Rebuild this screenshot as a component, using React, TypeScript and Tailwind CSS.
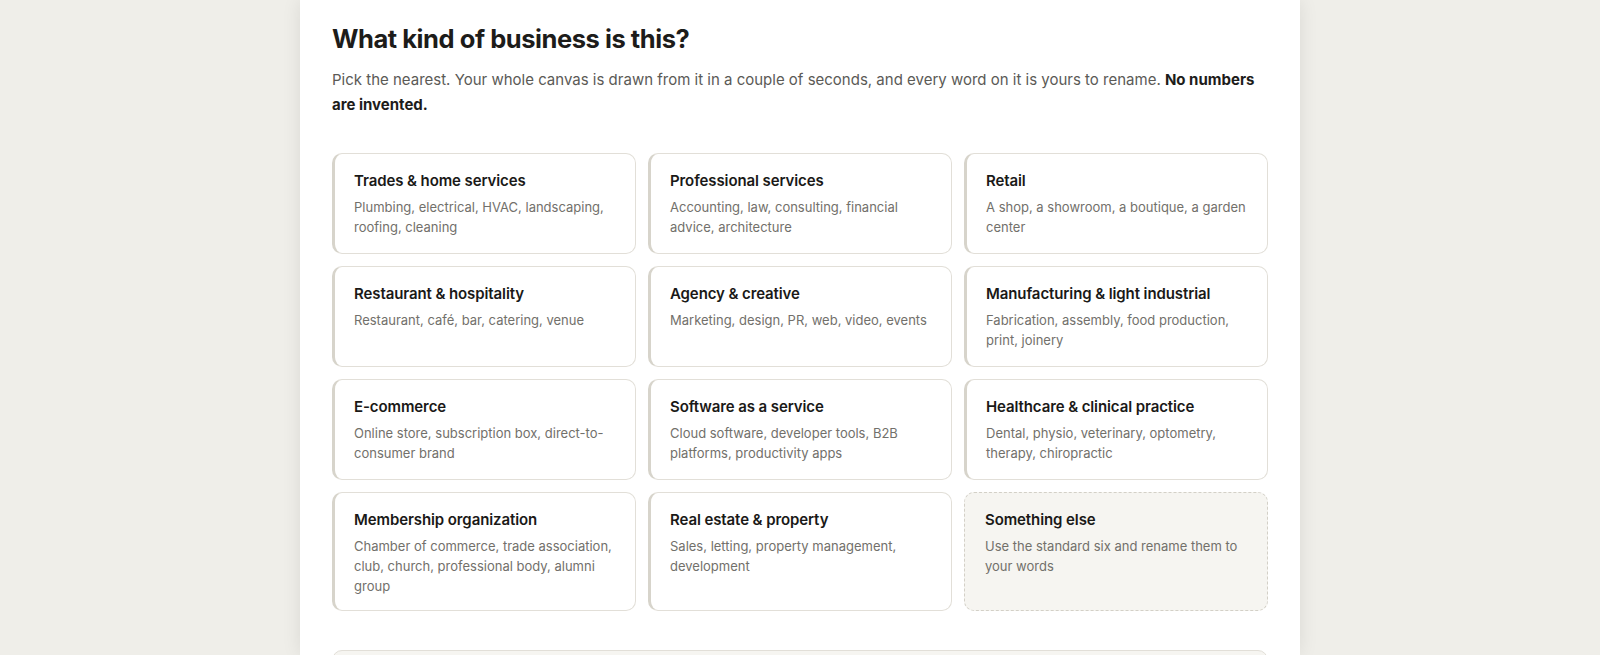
import React from "react";

const items: { title: string; desc: string; other?: boolean }[] = [
  { title: "Trades & home services", desc: "Plumbing, electrical, HVAC, landscaping, roofing, cleaning" },
  { title: "Professional services", desc: "Accounting, law, consulting, financial advice, architecture" },
  { title: "Retail", desc: "A shop, a showroom, a boutique, a garden center" },
  { title: "Restaurant & hospitality", desc: "Restaurant, café, bar, catering, venue" },
  { title: "Agency & creative", desc: "Marketing, design, PR, web, video, events" },
  { title: "Manufacturing & light industrial", desc: "Fabrication, assembly, food production, print, joinery" },
  { title: "E-commerce", desc: "Online store, subscription box, direct-to-consumer brand" },
  { title: "Software as a service", desc: "Cloud software, developer tools, B2B platforms, productivity apps" },
  { title: "Healthcare & clinical practice", desc: "Dental, physio, veterinary, optometry, therapy, chiropractic" },
  { title: "Membership organization", desc: "Chamber of commerce, trade association, club, church, professional body, alumni group" },
  { title: "Real estate & property", desc: "Sales, letting, property management, development" },
  { title: "Something else", desc: "Use the standard six and rename them to your words", other: true },
];

export default function App() {
  return (
    <div className="min-h-[655px] h-[655px] overflow-hidden bg-[#efeee9] flex justify-center" style={{ fontFamily: "Inter, 'Noto Sans', sans-serif" }}>
      <div className="w-[1000px] bg-white shadow-[0_0_18px_rgba(0,0,0,0.09)] px-8 pt-[21px]">
        <h1 className="text-[25.5px] leading-[36px] font-bold text-[#1d1c1a] tracking-[-0.45px]">What kind of business is this?</h1>
        <p className="mt-[10px] text-[15px] leading-[25px] text-[#5b5a56]">
          Pick the nearest. Your whole canvas is drawn from it in a couple of seconds, and every word on it is yours to rename.{" "}
          <strong className="font-bold text-[#1d1c1a]">No numbers are invented.</strong>
        </p>
        <div className="mt-[36px] grid grid-cols-3 gap-3">
          {items.map((it) => (
            <div
              key={it.title}
              className={
                it.other
                  ? "flex flex-col justify-start rounded-[10px] border-[1.5px] border-dashed border-[#d3d0c7] bg-[#f6f5f1] pl-[20px] pr-5 pt-[16px] pb-[14px] min-h-[101px]"
                  : "flex flex-col justify-start rounded-[10px] border-[1.5px] border-l-[3px] border-[#e2dfd8] border-l-[#d7d4cb] bg-white pl-[19px] pr-5 pt-[16px] pb-[14px] min-h-[101px]"
              }
            >
              <div className="text-[15px] leading-[22px] font-semibold text-[#1a1917] tracking-[-0.1px]">{it.title}</div>
              <div className="mt-[5px] text-[13px] leading-[20px] text-[#72706b]">{it.desc}</div>
            </div>
          ))}
        </div>
        <div className="mt-[39px] h-[60px] rounded-[10px] border-[1.5px] border-[#e2dfd8] bg-[#f6f5f1]" />
      </div>
    </div>
  );
}
